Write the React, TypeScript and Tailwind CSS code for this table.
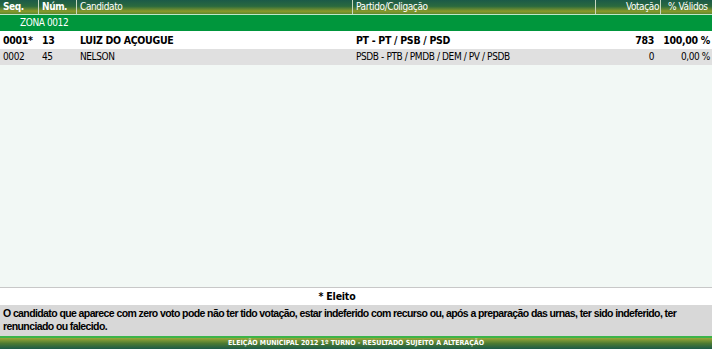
import React from "react";

const font = { fontFamily: '"DejaVu Sans Condensed", "DejaVu Sans", Tahoma, sans-serif' };
const noteFont = { fontFamily: '"Liberation Sans", Arial, sans-serif' };

export default function App() {
  return (
    <div className="w-[712px] h-[349px] flex flex-col bg-white text-[10px] tracking-[-0.4px] text-black overflow-hidden" style={font}>
      {/* header */}
      <div className="h-[14px] flex bg-[linear-gradient(to_bottom,#1b5a48_0%,#2b6a3e_45%,#8a9a2a_80%,#5c8a30_100%)] text-white leading-[14px] whitespace-nowrap">
        <div className="w-[39px] pl-[3px] border-r border-[#c8d8c0] font-bold">Seq.</div>
        <div className="w-[38px] pl-[3px] border-r border-[#c8d8c0] font-bold">Núm.</div>
        <div className="w-[276px] pl-[3px] border-r border-[#c8d8c0]">Candidato</div>
        <div className="w-[243px] pl-[3px] border-r border-[#c8d8c0]">Partido/Coligação</div>
        <div className="w-[65px] pr-[1px] text-right border-r border-[#c8d8c0]">Votação</div>
        <div className="flex-1 pl-[7px]">% Válidos</div>
      </div>
      <div className="h-[1px] bg-[#bfe6c8]" />
      <div className="h-[16px] bg-[#00963c] text-white pl-[20px] leading-[16px]">ZONA 0012</div>
      <div className="h-[1px] bg-white" />
      <div className="h-[17px] flex bg-white font-bold text-[10.5px] tracking-[-0.3px] leading-[17px] whitespace-nowrap">
        <div className="w-[39px] pl-[3px]">0001*</div>
        <div className="w-[38px] pl-[3px]">13</div>
        <div className="w-[276px] pl-[3px]">LUIZ DO AÇOUGUE</div>
        <div className="w-[243px] pl-[3px]">PT - PT / PSB / PSD</div>
        <div className="w-[65px] pr-[7px] text-right">783</div>
        <div className="flex-1 pr-[2px] text-right">100,00 %</div>
      </div>
      <div className="h-[16px] flex bg-[#e0e0e0] leading-[16px] whitespace-nowrap">
        <div className="w-[39px] pl-[3px]">0002</div>
        <div className="w-[38px] pl-[3px]">45</div>
        <div className="w-[276px] pl-[3px]">NELSON</div>
        <div className="w-[243px] pl-[3px]">PSDB - PTB / PMDB / DEM / PV / PSDB</div>
        <div className="w-[65px] pr-[7px] text-right">0</div>
        <div className="flex-1 pr-[2px] text-right">0,00 %</div>
      </div>
      <div className="flex-1 bg-[#f2f8f5] border-b border-[#c8c8c8]" />
      <div className="h-[17px] bg-white text-center font-bold text-[10.5px] tracking-[-0.2px] leading-[17px] pr-[38px]">* Eleito</div>
      <div className="h-[31px] bg-[#d8d8d8] font-bold text-[10.5px] tracking-[-0.6px] pl-[3px] pr-[20px] pt-[2px] leading-[13px]" style={noteFont}>
        O candidato que aparece com zero voto pode não ter tido votação, estar indeferido com recurso ou, após a preparação das urnas, ter sido indeferido, ter renunciado ou falecido.
      </div>
      <div className="h-[2px] bg-[#3cb44a]" />
      <div className="h-[11px] bg-[linear-gradient(to_bottom,#9aa838_0%,#4c7a32_50%,#1b5a48_100%)] text-white font-bold text-[7px] tracking-normal text-center leading-[11px]">
        ELEIÇÃO MUNICIPAL 2012 1º TURNO - RESULTADO SUJEITO A ALTERAÇÃO
      </div>
    </div>
  );
}
